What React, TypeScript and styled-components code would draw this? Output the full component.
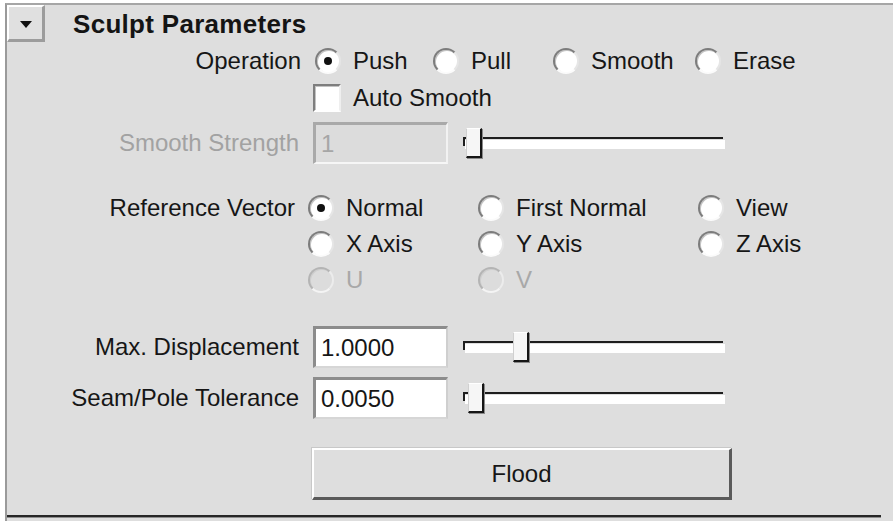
import React from "react";
import styled, { createGlobalStyle } from "styled-components";

const Global = createGlobalStyle`
  html, body { margin: 0; padding: 0; background: #ffffff; }
  body { font-family: "Liberation Sans", Arial, sans-serif; color: #161616; }
  * { box-sizing: border-box; }
`;

const Frame = styled.div`
  margin: 3px 0 0 5px;
  width: 888px;
  height: 518px;
  background: #dedede;
  border-top: 2px solid #a6a6a6;
  border-left: 2px solid #9a9a9a;
  display: flex;
  flex-direction: column;
  overflow: hidden;
`;

const Header = styled.div`
  display: flex;
  align-items: center;
  height: 37px;
`;

const CollapseButton = styled.div`
  width: 38px;
  height: 37px;
  background: #e0e0e0;
  border-top: 2px solid #ffffff;
  border-left: 2px solid #ffffff;
  border-right: 3px solid #9c9c9c;
  border-bottom: 3px solid #9c9c9c;
  display: flex;
  align-items: center;
  justify-content: center;
`;

const Arrow = styled.div`
  width: 0;
  height: 0;
  margin-top: 2px;
  border-left: 6px solid transparent;
  border-right: 6px solid transparent;
  border-top: 7px solid #111;
`;

const Title = styled.div`
  margin-left: 28px;
  font-size: 26px;
  font-weight: bold;
  letter-spacing: 0.3px;
  line-height: 1;
  color: #141414;
`;

const Row = styled.div<{ $h: number; $mt?: number; $top?: boolean }>`
  display: flex;
  align-items: ${(p) => (p.$top ? "flex-start" : "center")};
  height: ${(p) => p.$h}px;
  margin-top: ${(p) => p.$mt ?? 0}px;
  flex-shrink: 0;
`;

const Label = styled.div<{ $w: number; $gap: number; $dim?: boolean; $lh?: number }>`
  width: ${(p) => p.$w}px;
  margin-right: ${(p) => p.$gap}px;
  flex-shrink: 0;
  text-align: right;
  white-space: nowrap;
  font-size: 24px;
  line-height: ${(p) => (p.$lh ? `${p.$lh}px` : "1")};
  color: ${(p) => (p.$dim ? "#a2a2a2" : "#161616")};
`;

const OptionText = styled.span<{ $dim?: boolean }>`
  font-size: 24px;
  line-height: 1;
  white-space: nowrap;
  color: ${(p) => (p.$dim ? "#a8a8a8" : "#161616")};
`;

const Option = styled.div<{ $w?: number }>`
  display: flex;
  align-items: center;
  gap: 12px;
  width: ${(p) => (p.$w ? `${p.$w}px` : "auto")};
  height: 36px;
  flex-shrink: 0;
`;

const RadioCircle = styled.span<{ $on?: boolean; $dim?: boolean }>`
  position: relative;
  width: 26px;
  height: 26px;
  border-radius: 50%;
  flex-shrink: 0;
  background: ${(p) => (p.$dim ? "#dcdcdc" : "#ffffff")};
  border: 2px solid;
  border-color: ${(p) =>
    p.$dim ? "#b4b4b4 #ececec #f4f4f4 #b4b4b4" : "#7c7c7c #e6e6e6 #fbfbfb #7c7c7c"};
  box-shadow: inset 1px 1px 0 ${(p) => (p.$dim ? "#cfcfcf" : "#c4c4c4")};
  &::after {
    content: "";
    display: ${(p) => (p.$on ? "block" : "none")};
    position: absolute;
    left: 50%;
    top: 50%;
    width: 8px;
    height: 8px;
    margin: -4px 0 0 -4px;
    border-radius: 50%;
    background: #111;
  }
`;

const Checkbox = styled.span`
  width: 28px;
  height: 28px;
  flex-shrink: 0;
  background: #ffffff;
  border: 2px solid;
  border-color: #7e7e7e #efefef #ffffff #7e7e7e;
  box-shadow: inset 1px 1px 0 #c2c2c2;
`;

const RefGrid = styled.div`
  display: grid;
  grid-template-columns: 170px 220px auto;
  grid-auto-rows: 36px;
`;

const Field = styled.div<{ $dim?: boolean }>`
  width: 135px;
  height: 42px;
  flex-shrink: 0;
  display: flex;
  align-items: center;
  padding-left: 5px;
  font-size: 24px;
  color: ${(p) => (p.$dim ? "#a6a6a6" : "#161616")};
  background: ${(p) => (p.$dim ? "#dcdcdc" : "#ffffff")};
  border-style: solid;
  border-width: 3px 2px 2px 3px;
  border-color: ${(p) =>
    p.$dim ? "#a9a9a9 #f2f2f2 #f6f6f6 #a9a9a9" : "#8c8c8c #cfcfcf #d6d6d6 #8c8c8c"};
`;

const Slider = styled.div`
  position: relative;
  margin-left: 15px;
  width: 262px;
  height: 32px;
  display: flex;
  align-items: center;
  flex-shrink: 0;
`;

const Track = styled.div`
  width: 262px;
  height: 12px;
  background:
    linear-gradient(#1e1e1e, #1e1e1e) 0 0 / 260px 2px no-repeat,
    linear-gradient(#1e1e1e, #1e1e1e) 0 0 / 2px 9px no-repeat,
    linear-gradient(#ffffff, #ffffff) 2px 3px / 260px 9px no-repeat;
`;

const Handle = styled.div`
  position: absolute;
  top: 1px;
  width: 16px;
  height: 30px;
  background: #f6f6f6;
  border-top: 1px solid #ffffff;
  border-left: 1px solid #d0d0d0;
  border-right: 2px solid #161616;
  border-bottom: 2px solid #161616;
  box-shadow: 1px 1px 0 #8a8a8a;
`;

const FloodButton = styled.div`
  margin-top: 29px;
  margin-left: 305px;
  width: 420px;
  height: 52px;
  flex-shrink: 0;
  display: flex;
  align-items: center;
  justify-content: center;
  font-size: 24px;
  color: #161616;
  background: #dedede;
  border-top: 2px solid #ffffff;
  border-left: 2px solid #ffffff;
  border-right: 3px solid #5a5a5a;
  border-bottom: 3px solid #5a5a5a;
  box-shadow: -1px -1px 0 #c8c8c8;
`;

const Separator = styled.div`
  margin-top: 15px;
  width: 874px;
  height: 3px;
  flex-shrink: 0;
  border-top: 2px solid #262626;
  border-bottom: 1px solid #8e8e8e;
`;

type RadioProps = { label: string; on?: boolean; dim?: boolean; w?: number };
const Radio = ({ label, on, dim, w }: RadioProps) => (
  <Option $w={w}>
    <RadioCircle $on={on} $dim={dim} />
    <OptionText $dim={dim}>{label}</OptionText>
  </Option>
);

const SliderCtl = ({ pos }: { pos: number }) => (
  <Slider>
    <Track />
    <Handle style={{ left: `${pos}px` }} />
  </Slider>
);

export default function App() {
  return (
    <>
      <Global />
      <Frame>
        <Header>
          <CollapseButton>
            <Arrow />
          </CollapseButton>
          <Title>Sculpt Parameters</Title>
        </Header>

        <Row $h={38}>
          <Label $w={294} $gap={14}>Operation</Label>
          <Radio label="Push" on w={118} />
          <Radio label="Pull" w={120} />
          <Radio label="Smooth" w={142} />
          <Radio label="Erase" />
        </Row>

        <Row $h={36}>
          <Label $w={292} $gap={14} />
          <Option>
            <Checkbox />
            <OptionText>Auto Smooth</OptionText>
          </Option>
        </Row>

        <Row $h={54}>
          <Label $w={292} $gap={14} $dim>Smooth Strength</Label>
          <Field $dim>1</Field>
          <SliderCtl pos={3} />
        </Row>

        <Row $h={108} $mt={20} $top>
          <Label $w={288} $gap={13} $lh={36}>Reference Vector</Label>
          <RefGrid>
            <Radio label="Normal" on />
            <Radio label="First Normal" />
            <Radio label="View" />
            <Radio label="X Axis" />
            <Radio label="Y Axis" />
            <Radio label="Z Axis" />
            <Radio label="U" dim />
            <Radio label="V" dim />
          </RefGrid>
        </Row>

        <Row $h={42} $mt={28}>
          <Label $w={292} $gap={14}>Max. Displacement</Label>
          <Field>1.0000</Field>
          <SliderCtl pos={50} />
        </Row>

        <Row $h={42} $mt={9}>
          <Label $w={292} $gap={14}>Seam/Pole Tolerance</Label>
          <Field>0.0050</Field>
          <SliderCtl pos={5} />
        </Row>

        <FloodButton>Flood</FloodButton>
        <Separator />
      </Frame>
    </>
  );
}
